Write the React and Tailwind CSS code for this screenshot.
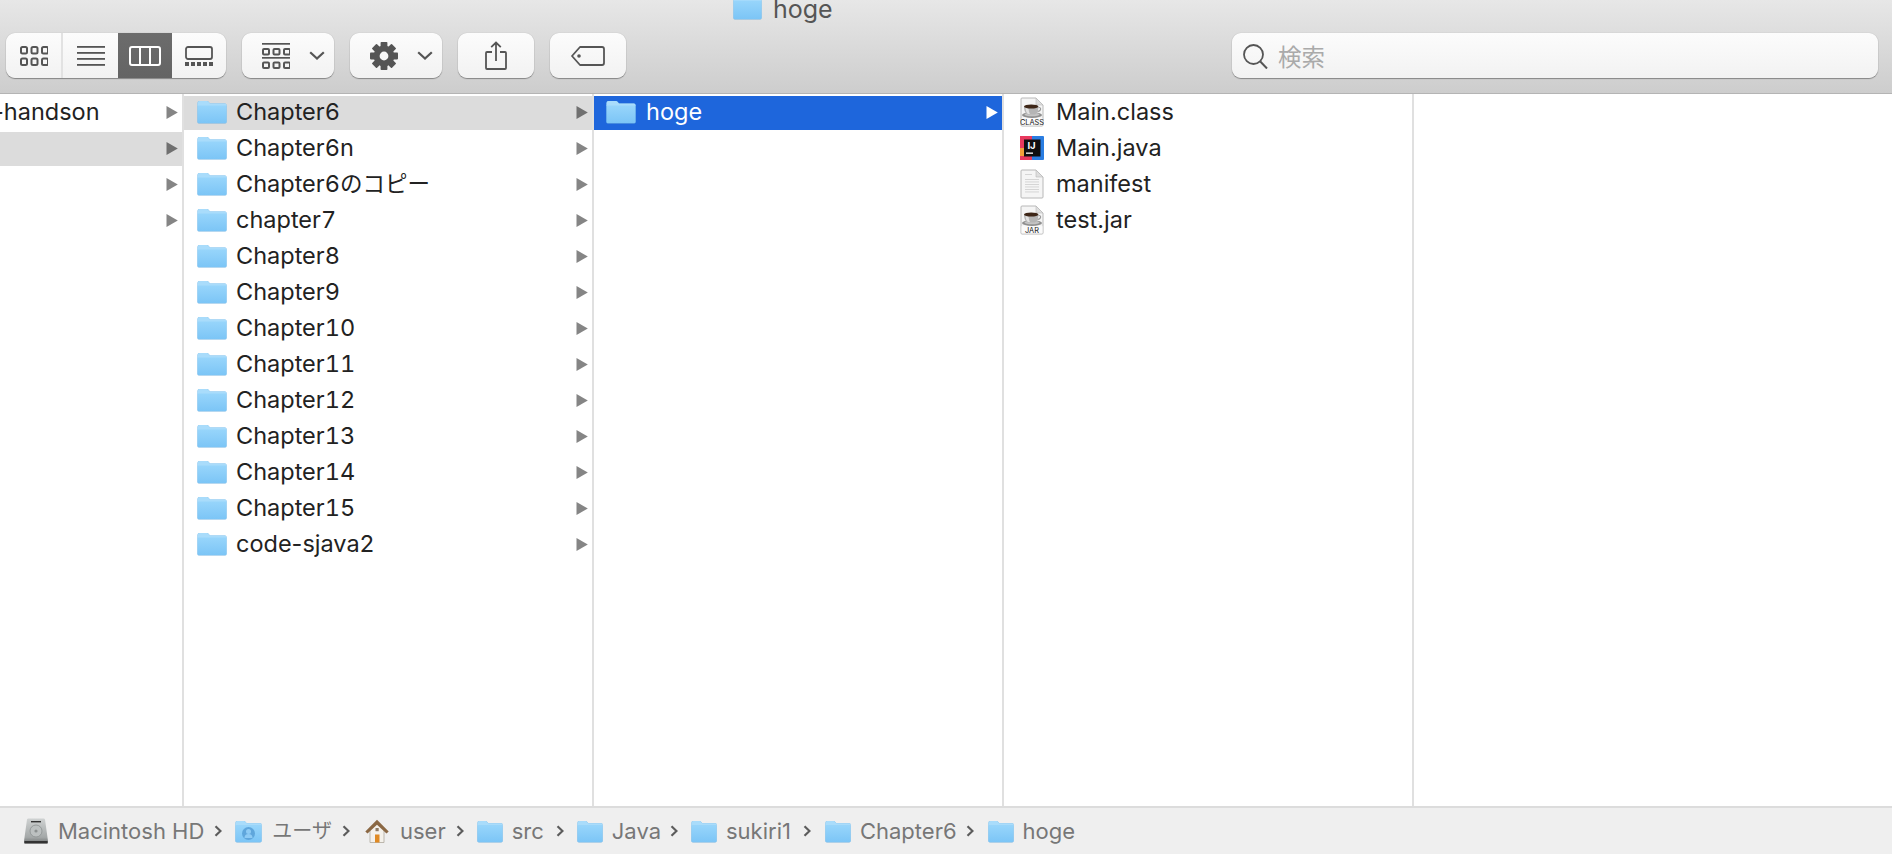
import React from 'react';

const col2 = ['Chapter6', 'Chapter6n', 'Chapter6のコピー', 'chapter7', 'Chapter8', 'Chapter9', 'Chapter10', 'Chapter11', 'Chapter12', 'Chapter13', 'Chapter14', 'Chapter15', 'code-sjava2'];

function Folder({ w = 30, h = 24 }) {
  return (
    <svg width={w} height={h} viewBox="0 0 30 24" preserveAspectRatio="none" className="shrink-0">
      <defs>
        <linearGradient id="folderBody" x1="0" y1="0" x2="0" y2="1">
          <stop offset="0" stopColor="#97d5fb" />
          <stop offset="1" stopColor="#7cc5f6" />
        </linearGradient>
      </defs>
      <path d="M0.5 3a2 2 0 0 1 2-2h7.5a2 2 0 0 1 1.5.7L13 3.5h15a1.5 1.5 0 0 1 1.5 1.5v17a1.5 1.5 0 0 1-1.5 1.5H2a1.5 1.5 0 0 1-1.5-1.5z" fill="#6fb2e2" />
      <path d="M0.5 3a2 2 0 0 1 2-2h7.5a2 2 0 0 1 1.5.7L13 3.5h15a1.5 1.5 0 0 1 1.5 1.5v1H0.5z" fill="#a9dcfb" />
      <path d="M0.5 5.5h29V22a1 1 0 0 1-1 1H1.5a1 1 0 0 1-1-1z" fill="url(#folderBody)" />
    </svg>
  );
}

function UsersFolder() {
  return (
    <div className="relative shrink-0">
      <Folder w={27} h={23} />
      <svg width="27" height="23" viewBox="0 0 27 23" className="absolute left-0 top-0">
        <circle cx="13.5" cy="13.5" r="6.5" fill="#5fa6dc" />
        <circle cx="13.5" cy="11.5" r="2.5" fill="#8ecbf5" />
        <path d="M9.5 18a4 4 0 0 1 8 0z" fill="#8ecbf5" />
      </svg>
    </div>
  );
}

function Arrow({ color = '#858585' }) {
  return (
    <svg width="12" height="13" viewBox="0 0 12 13" className="shrink-0">
      <polygon points="0.5,0 11.8,6.5 0.5,13" fill={color} />
    </svg>
  );
}

function Chevron() {
  return (
    <svg width="8" height="12" viewBox="0 0 8 12" className="shrink-0">
      <path d="M1.5 1.2L6.5 6L1.5 10.8" fill="none" stroke="#5c5c5c" strokeWidth="2.2" />
    </svg>
  );
}

function DownChevron() {
  return (
    <svg width="16" height="9" viewBox="0 0 16 9" className="shrink-0">
      <path d="M1.2 1.2L8 7.5L14.8 1.2" fill="none" stroke="#555" strokeWidth="2.2" />
    </svg>
  );
}

function GridIcon() {
  const cells = [];
  [0, 11.5].forEach((y) => {
    [0, 10.5, 21].forEach((x) => {
      cells.push(<rect key={`${x}-${y}`} x={x + 1} y={y + 1} width="6" height="6.5" rx="1.5" fill="none" stroke="#555" strokeWidth="2" />);
    });
  });
  return <svg width="28" height="20" viewBox="0 0 28 20">{cells}</svg>;
}

function ListIcon() {
  return (
    <svg width="28" height="20" viewBox="0 0 28 20">
      {[1, 7, 13, 19].map((y) => (
        <rect key={y} x="0" y={y - 1} width="28" height="1.8" fill="#555" />
      ))}
    </svg>
  );
}

function ColumnsIcon() {
  return (
    <svg width="32" height="20" viewBox="0 0 32 20">
      <rect x="1" y="1" width="30" height="18" rx="2" fill="none" stroke="#fff" strokeWidth="2" />
      <path d="M11 1v18M21 1v18" stroke="#fff" strokeWidth="2" />
    </svg>
  );
}

function GalleryIcon() {
  return (
    <svg width="28" height="20" viewBox="0 0 28 20">
      <rect x="1" y="1" width="26" height="12" rx="2" fill="none" stroke="#555" strokeWidth="1.8" />
      {[0, 6, 12, 18, 24].map((x) => (
        <rect key={x} x={x} y="16" width="4" height="4" fill="#555" />
      ))}
    </svg>
  );
}

function ArrangeIcon() {
  const cells = [];
  [5, 18.5].forEach((y) => {
    [0, 10.5, 21].forEach((x) => {
      cells.push(<rect key={`${x}-${y}`} x={x + 1} y={y + 1} width="6" height="5.5" rx="1" fill="none" stroke="#555" strokeWidth="2" />);
    });
  });
  return (
    <svg width="28" height="26" viewBox="0 0 28 26">
      <rect x="0" y="0" width="28" height="1.7" fill="#555" />
      <rect x="0" y="14" width="28" height="1.7" fill="#555" />
      {cells}
    </svg>
  );
}

function GearIcon() {
  return (
    <svg width="28" height="28" viewBox="0 0 28 28">
      {[0, 45, 90, 135, 180, 225, 270, 315].map((a) => (
        <rect key={a} x="10.6" y="0" width="6.8" height="7" rx="0.8" fill="#555" transform={`rotate(${a} 14 14)`} />
      ))}
      <circle cx="14" cy="14" r="7.4" fill="none" stroke="#555" strokeWidth="6" />
    </svg>
  );
}

function ShareIcon() {
  return (
    <svg width="22" height="29" viewBox="0 0 22 29">
      <path d="M7 11H2a1 1 0 0 0-1 1v15a1 1 0 0 0 1 1h18a1 1 0 0 0 1-1V12a1 1 0 0 0-1-1h-5" fill="none" stroke="#555" strokeWidth="1.8" />
      <path d="M11 20V1.5M6.2 6.2L11 1.5l4.8 4.7" fill="none" stroke="#555" strokeWidth="1.8" />
    </svg>
  );
}

function TagIcon() {
  return (
    <svg width="34" height="20" viewBox="0 0 34 20">
      <path d="M9 1h22a2 2 0 0 1 2 2v14a2 2 0 0 1-2 2H9L1 10z" fill="none" stroke="#555" strokeWidth="1.8" strokeLinejoin="round" />
      <circle cx="8" cy="10" r="1.8" fill="#555" />
    </svg>
  );
}

function SearchIcon() {
  return (
    <svg width="25" height="25" viewBox="0 0 25 25" className="mt-[2px] shrink-0">
      <circle cx="10.5" cy="10.5" r="9.5" fill="none" stroke="#555" strokeWidth="1.8" />
      <path d="M17.3 17.5L24 24.5" stroke="#555" strokeWidth="2" />
    </svg>
  );
}

function DocShape({ children }) {
  return (
    <svg width="24" height="30" viewBox="0 0 24 30" className="shrink-0">
      <path d="M1 2a1 1 0 0 1 1-1h14l7 7v20a1 1 0 0 1-1 1H2a1 1 0 0 1-1-1z" fill="#f5f5f5" stroke="#b8b8b8" strokeWidth="1" />
      <path d="M16 1v7h7z" fill="#dedede" stroke="#b8b8b8" strokeWidth="0.6" />
      {children}
    </svg>
  );
}

function JavaDoc({ label }) {
  return (
    <DocShape>
      <ellipse cx="12" cy="18" rx="10" ry="3" fill="#8f8f8f" />
      <ellipse cx="12" cy="17.4" rx="7.5" ry="1.8" fill="#c4c4c4" />
      <path d="M4 9.5h14.5c0 4.5-1.8 7.5-4 8H8c-2.2-.5-4-3.5-4-8z" fill="#b5b5b5" />
      <path d="M5.5 10h3c0 3 .6 5.5 1.5 7H8c-1.5-1-2.5-3.6-2.5-7z" fill="#e2e2e2" />
      <path d="M18.5 10.5c3-.5 3 3.5-1 4" fill="none" stroke="#999" strokeWidth="1.1" />
      <ellipse cx="11.2" cy="9.5" rx="7.2" ry="2" fill="#3e2718" />
      <rect x="1.5" y="21.2" width="21" height="7.2" fill="#fafafa" />
      <text x="12" y="27.8" textAnchor="middle" fontSize="7.4" fontFamily="Inter, sans-serif" fill="#222">{label}</text>
    </DocShape>
  );
}

function IntelliJIcon() {
  return (
    <svg width="24" height="24" viewBox="0 0 24 24" className="shrink-0">
      <rect width="24" height="24" rx="1" fill="#2a7de1" />
      <rect width="12" height="24" fill="#e8395e" />
      <rect y="12" width="7" height="8" fill="#f2a03a" />
      <rect x="4" y="3.5" width="16.5" height="17" fill="#0f0f0f" />
      <text x="11.5" y="12.8" textAnchor="middle" fontSize="9.5" fontWeight="700" fontFamily="Inter, sans-serif" fill="#fff">IJ</text>
      <rect x="6" y="16.5" width="7" height="1.3" fill="#fff" />
    </svg>
  );
}

function ManifestIcon() {
  return (
    <DocShape>
      {[10, 12.5, 15, 17.5, 20, 22.5].map((y) => (
        <rect key={y} x="5" y={y} width="14" height="0.9" fill="#d2d2d2" />
      ))}
      <rect x="5" y="5" width="7" height="0.9" fill="#d2d2d2" />
    </DocShape>
  );
}

function DriveIcon() {
  return (
    <svg width="24" height="26" viewBox="0 0 24 26" className="shrink-0">
      <defs>
        <linearGradient id="driveBody" x1="0" y1="0" x2="0" y2="1">
          <stop offset="0" stopColor="#cfd2d2" />
          <stop offset="0.75" stopColor="#a4a8a8" />
          <stop offset="1" stopColor="#6f7272" />
        </linearGradient>
      </defs>
      <path d="M3 1.5a1.5 1.5 0 0 1 1.5-1h15a1.5 1.5 0 0 1 1.5 1L24 23v1.5a1 1 0 0 1-1 1H1a1 1 0 0 1-1-1V23z" fill="url(#driveBody)" />
      <rect x="7" y="3" width="10" height="1.4" fill="#333" />
      <circle cx="12" cy="13" r="6" fill="#bcc0c0" stroke="#8c9090" strokeWidth="0.8" />
      <circle cx="12" cy="13" r="1.6" fill="#8c9090" />
      <rect x="0.5" y="23" width="23" height="2.4" fill="#333" />
    </svg>
  );
}

function HomeIcon() {
  return (
    <svg width="24" height="24" viewBox="0 0 24 24" className="ml-[2px] mr-px shrink-0">
      <path d="M5 10.5L12 4L19 10.5V23.5H5z" fill="#f4f1eb" stroke="#b5b0a6" strokeWidth="0.9" />
      <polygon points="0.3,12.5 12,0.8 23.7,12.5 21.5,14.5 12,5.8 2.5,14.5" fill="#8b6844" />
      <rect x="10" y="15.5" width="4.5" height="8" fill="#e08a24" />
      <rect x="10.5" y="9" width="3.2" height="3.2" fill="#8f7a63" />
    </svg>
  );
}

function ToolButton({ className, children }) {
  return (
    <div className={`flex items-center rounded-[9px] bg-gradient-to-b from-[#fcfcfc] to-[#f2f2f2] shadow-[0_1px_1px_rgba(0,0,0,0.35),0_0_1px_rgba(0,0,0,0.25)] ${className}`}>
      {children}
    </div>
  );
}

function Row({ selected, children, arrow, pr }) {
  return (
    <div className="h-9 py-px">
      <div className={`flex h-[34px] items-center pb-[2px] ${selected} ${pr}`}>
        {children}
        {arrow}
      </div>
    </div>
  );
}

function Crumb({ icon, text, last, textClass = 'ml-[10px]', gap = 'ml-[10px] mr-[13px]' }) {
  return (
    <>
      {icon}
      <span className={`whitespace-nowrap ${textClass}`}>{text}</span>
      {!last && (
        <span className={gap}>
          <Chevron />
        </span>
      )}
    </>
  );
}

export default function App() {
  return (
    <div className="flex h-[854px] w-full flex-col overflow-hidden bg-white font-['Inter','Noto_Sans_CJK_JP',sans-serif] text-[23.5px] text-[#222]">
      {/* Toolbar */}
      <div className="h-[94px] shrink-0 border-b border-[#b4b4b4] bg-gradient-to-b from-[#e7e7e7] to-[#cdcdcd]">
        <div className="h-[33px] overflow-hidden pl-[733px]">
          <div className="-mt-[6px] flex items-center text-[#555]">
            <span className="-mt-[4px]"><Folder w={29} h={25} /></span>
            <span className="ml-[11px] text-[25px] leading-[30px]">hoge</span>
          </div>
        </div>
        <div className="flex h-[45px] gap-4 pl-[6px] pr-[14px]">
          <ToolButton className="w-[220px] overflow-hidden">
            <div className="flex h-full w-[57px] items-center justify-center border-r-2 border-[#e2e2e2]">
              <GridIcon />
            </div>
            <div className="flex h-full w-[55px] items-center justify-center">
              <ListIcon />
            </div>
            <div className="flex h-full w-[54px] items-center justify-center bg-gradient-to-b from-[#6c6c6c] to-[#646464]">
              <ColumnsIcon />
            </div>
            <div className="flex h-full w-[54px] items-center justify-center">
              <GalleryIcon />
            </div>
          </ToolButton>
          <ToolButton className="w-[92px] pl-[20px]">
            <ArrangeIcon />
            <span className="ml-[19px]"><DownChevron /></span>
          </ToolButton>
          <ToolButton className="w-[92px] pl-[20px]">
            <GearIcon />
            <span className="ml-[19px]"><DownChevron /></span>
          </ToolButton>
          <ToolButton className="w-[76px] justify-center">
            <ShareIcon />
          </ToolButton>
          <ToolButton className="w-[76px] justify-center">
            <TagIcon />
          </ToolButton>
          <ToolButton className="ml-auto w-[646px] pl-[11px]">
            <SearchIcon />
            <span className="ml-[10px] pt-[4px] text-[#aaa]">検索</span>
          </ToolButton>
        </div>
      </div>

      {/* Columns */}
      <div className="flex min-h-0 flex-1">
        <div className="w-[184px] shrink-0 overflow-hidden border-r-2 border-[#e0e0e0] pt-px">
          {['-handson', '', '', ''].map((name, i) => (
            <Row key={i} selected={i === 1 ? 'bg-[#dcdcdc]' : ''} pr="pr-[4px]" arrow={<span className="ml-auto"><Arrow color={i === 1 ? '#707070' : '#858585'} /></span>}>
              <span className="-ml-[7px]">{name}</span>
            </Row>
          ))}
        </div>
        <div className="w-[410px] shrink-0 border-r-2 border-[#e0e0e0] pt-px">
          {col2.map((name, i) => (
            <Row key={name} selected={i === 0 ? 'bg-[#dcdcdc]' : ''} pr="pl-[13px] pr-[4px]" arrow={<span className="ml-auto"><Arrow color={i === 0 ? '#707070' : '#858585'} /></span>}>
              <Folder />
              <span className={`ml-[9px] ${name.includes('-') ? '' : 'tabular-nums'}`}>
                {name.endsWith('のコピー') ? (
                  <>Chapter6<span className="text-[22.5px]">のコピー</span></>
                ) : name}
              </span>
            </Row>
          ))}
        </div>
        <div className="w-[410px] shrink-0 border-r-2 border-[#e0e0e0] pt-px">
          <Row selected="bg-[#1e66dc] text-white" pr="pl-[12px] pr-[4px]" arrow={<span className="ml-auto"><Arrow color="#fff" /></span>}>
            <Folder />
            <span className="ml-[10px]">hoge</span>
          </Row>
        </div>
        <div className="w-[410px] shrink-0 border-r-2 border-[#e0e0e0] pt-px">
          {[
            { name: 'Main.class', icon: <JavaDoc label="CLASS" /> },
            { name: 'Main.java', icon: <IntelliJIcon /> },
            { name: 'manifest', icon: <ManifestIcon /> },
            { name: 'test.jar', icon: <JavaDoc label="JAR" /> },
          ].map((f) => (
            <Row key={f.name} selected="" pr="pl-[16px]">
              <span className="flex w-[24px] justify-center">{f.icon}</span>
              <span className="ml-[12px]">{f.name}</span>
            </Row>
          ))}
        </div>
        <div className="flex-1" />
      </div>

      {/* Path bar */}
      <div className="flex h-[48px] shrink-0 items-center border-t-2 border-[#dcdcdc] bg-[#efefef] pl-[24px] text-[22px] text-[#777]">
        <Crumb icon={<DriveIcon />} text="Macintosh HD" />
        <Crumb icon={<UsersFolder />} text="ユーザ" textClass="ml-[10px] text-[20px]" />
        <Crumb icon={<HomeIcon />} text="user" />
        <Crumb icon={<Folder w={26} h={23} />} text="src" textClass="ml-[9px]" gap="ml-[12px] mr-[13px]" />
        <Crumb icon={<Folder w={26} h={23} />} text="Java" textClass="ml-[9px]" gap="ml-[9px] mr-[13px]" />
        <Crumb icon={<Folder w={26} h={23} />} text="sukiri1" textClass="ml-[9px]" gap="ml-[12px] mr-[14px]" />
        <Crumb icon={<Folder w={26} h={23} />} text="Chapter6" textClass="ml-[9px]" gap="ml-[9px] mr-[14px]" />
        <Crumb icon={<Folder w={26} h={23} />} text="hoge" textClass="ml-[9px]" last />
      </div>
    </div>
  );
}
